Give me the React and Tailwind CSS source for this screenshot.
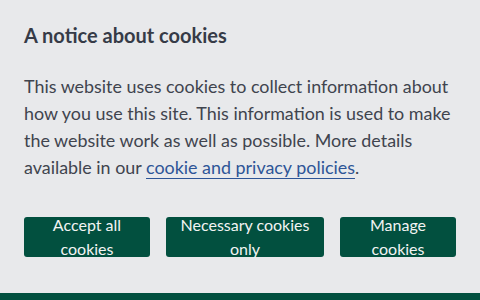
export default function App() {
	return (
		<div className="flex h-[300px] w-[480px] flex-col bg-[#e8e9eb] font-['Lato','Liberation_Sans',sans-serif]">
			<div className="flex flex-col px-6 pt-[21px]">
				<h2 className="text-[20px] font-bold leading-[28px] text-[#363b47]">A notice about cookies</h2>
				<p className="mt-[24px] text-[17.9px] leading-[27px] text-[#40444e]">
					This website uses cookies to collect information about how you use this site. This information is used to make the
					website work as well as possible. More details available in our{" "}
					<a href="#" className="text-[#2e5597] underline decoration-1 underline-offset-[4px]">
						cookie and privacy policies
					</a>
					.
				</p>
				<div className="mt-[36px] flex gap-4">
					<button className="flex h-10 w-[126px] items-center justify-center rounded-[3px] bg-[#02503f] px-3 text-center text-[16px] leading-[24px] text-[#f2f4f3]">
						Accept all cookies
					</button>
					<button className="flex h-10 w-[158px] items-center justify-center rounded-[3px] bg-[#02503f] px-3 text-center text-[16px] leading-[24px] text-[#f2f4f3]">
						Necessary cookies only
					</button>
					<button className="flex h-10 w-[116px] items-center justify-center rounded-[3px] bg-[#02503f] px-3 text-center text-[16px] leading-[24px] text-[#f2f4f3]">
						Manage cookies
					</button>
				</div>
			</div>
			<div className="mt-auto h-[7px] bg-[#02503f]" />
		</div>
	);
}
